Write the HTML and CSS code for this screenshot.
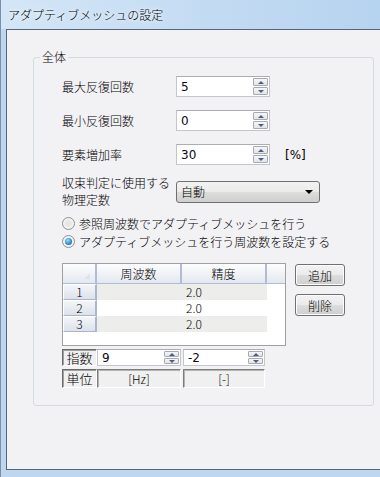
FILE: index.html
```html
<!DOCTYPE html>
<html lang="ja">
<head>
<meta charset="utf-8">
<title>アダプティブメッシュの設定</title>
<link rel="stylesheet" href="styles.css">
</head>
<body>
<div class="window">
  <div class="titlebar"><span class="title">アダプティブメッシュの設定</span></div>
  <div class="client">
    <fieldset class="group">
      <legend>全体</legend>
      <div class="inner">
        <div class="frow">
          <span class="lbl">最大反復回数</span>
          <div class="spin w94"><span class="val">5</span><span class="btns"><span class="sbtn up"></span><span class="sbtn dn"></span></span></div>
        </div>
        <div class="frow">
          <span class="lbl">最小反復回数</span>
          <div class="spin w94"><span class="val">0</span><span class="btns"><span class="sbtn up"></span><span class="sbtn dn"></span></span></div>
        </div>
        <div class="frow">
          <span class="lbl">要素増加率</span>
          <div class="spin w94"><span class="val">30</span><span class="btns"><span class="sbtn up"></span><span class="sbtn dn"></span></span></div>
          <span class="unit">[%]</span>
        </div>
        <div class="frow combo-row">
          <span class="lbl two"><span class="ln">収束判定に使用する</span><span class="ln">物理定数</span></span>
          <div class="combo"><span>自動</span><span class="carrow"></span></div>
        </div>
        <div class="radios">
          <label class="radio"><span class="rc"></span>参照周波数でアダプティブメッシュを行う</label>
          <label class="radio"><span class="rc on"></span>アダプティブメッシュを行う周波数を設定する</label>
        </div>
        <div class="tablerow">
          <div class="grid">
            <div class="hd corner"><span class="tri"></span></div>
            <div class="hd">周波数</div>
            <div class="hd">精度</div>
            <div class="hd last"></div>
            <div class="rh">1</div><div class="cell alt"></div><div class="cell alt">2.0</div><div class="cell blank"></div>
            <div class="rh">2</div><div class="cell"></div><div class="cell">2.0</div><div class="cell blank"></div>
            <div class="rh">3</div><div class="cell alt"></div><div class="cell alt">2.0</div><div class="cell blank"></div>
          </div>
          <div class="btncol">
            <button class="btn">追加</button>
            <button class="btn">削除</button>
          </div>
        </div>
        <div class="exprow">
          <span class="box">指数</span>
          <div class="spin w84 small"><span class="val">9</span><span class="btns"><span class="sbtn up"></span><span class="sbtn dn"></span></span></div>
          <div class="spin w82 small"><span class="val">-2</span><span class="btns"><span class="sbtn up"></span><span class="sbtn dn"></span></span></div>
        </div>
        <div class="unitrow">
          <span class="box">単位</span>
          <span class="ucell w84">[Hz]</span>
          <span class="ucell w82">[-]</span>
        </div>
      </div>
    </fieldset>
  </div>
</div>
</body>
</html>
```

FILE: styles.css
```css
* { box-sizing: border-box; }
html, body { margin: 0; padding: 0; }
body {
  width: 380px;
  height: 477px;
  overflow: hidden;
  font-family: "Noto Sans CJK JP", "Noto Sans", sans-serif;
  font-size: 12px;
  font-weight: 300;
  color: #000;
}
.window {
  width: 380px;
  height: 477px;
  display: flex;
  flex-direction: column;
  background: #bfd6ef;
  border-left: 1px solid #7a90a8;
  overflow: hidden;
}
.titlebar {
  height: 29px;
  flex: none;
  display: flex;
  align-items: center;
  padding-left: 7px;
  background: linear-gradient(90deg, #d4e6f7 0%, #c6ddf3 45%, #b6d3ef 100%);
}
.title {
  line-height: 14px;
  text-shadow: 0 0 6px #f2f8ff, 0 0 3px #f2f8ff;
}
.client {
  flex: 1;
  margin-left: 5px;
  margin-bottom: 7px;
  border: 1px solid #56667a;
  border-right: none;
  background: #f2f1f4;
}
.group {
  margin: 20px 0 0 26px;
  width: 341px;
  border: 1px solid #d3dbe2;
  border-radius: 3px;
  padding: 0 0 17px 6px;
}
.group legend {
  line-height: 14px;
  padding: 0 2px;
}
.inner {
  padding: 12px 0 0 22px;
}
.frow {
  display: flex;
  align-items: center;
  height: 21px;
  margin-bottom: 13px;
}
.lbl {
  width: 114px;
  flex: none;
  line-height: 14px;
}
.lbl.two {
  display: flex;
  flex-direction: column;
}
.lbl.two .ln {
  display: block;
  height: 14px;
  line-height: 14px;
  overflow: visible;
}
.lbl.two .ln + .ln { margin-top: 3px; }
.spin {
  position: relative;
  height: 21px;
  display: flex;
  align-items: center;
  background: #fff;
  border: 1px solid #c3c6cc;
  border-top-color: #abadb3;
  padding-left: 4px;
}
.w94 { width: 94px; }
.w84 { width: 84px; }
.w82 { width: 82px; }
.val {
  flex: 1;
  font-family: "DejaVu Sans", sans-serif;
  font-size: 12px;
  font-weight: 400;
  color: #0a0a14;
}
.btns {
  display: flex;
  flex-direction: column;
  justify-content: center;
  gap: 1px;
  width: 16px;
  height: 100%;
  padding: 1px 1px 1px 0;
}
.sbtn {
  flex: 1;
  display: flex;
  align-items: center;
  justify-content: center;
  border: 1px solid #a7abb0;
  border-radius: 1px;
  background: linear-gradient(#f5f6f7, #e2e4e8);
}
.sbtn::after {
  content: "";
  width: 0;
  height: 0;
  border-left: 3px solid transparent;
  border-right: 3px solid transparent;
}
.up::after { border-bottom: 3px solid #4a5e82; }
.dn::after { border-top: 3px solid #4a5e82; }
.unit {
  margin-left: 15px;
  font-family: "DejaVu Sans", sans-serif;
  font-weight: 400;
}
.combo-row {
  height: 31px;
  margin-bottom: 8px;
  margin-top: -2px;
}
.combo {
  width: 144px;
  height: 22px;
  border: 1px solid #707070;
  border-radius: 3px;
  display: flex;
  align-items: center;
  justify-content: space-between;
  padding: 0 6px 0 4px;
  background: linear-gradient(#f2f2f2 0%, #ebebeb 50%, #dddddd 50%, #cfcfcf 100%);
}
.carrow {
  width: 0;
  height: 0;
  border-left: 4px solid transparent;
  border-right: 4px solid transparent;
  border-top: 4px solid #000;
}
.radios {
  display: flex;
  flex-direction: column;
  gap: 1px;
}
.radio {
  display: flex;
  align-items: center;
  height: 17px;
  gap: 4px;
}
.rc {
  width: 13px;
  height: 13px;
  border-radius: 50%;
  border: 1px solid #8e8f8f;
  background: radial-gradient(circle, #e6e6e6 30%, #f6f6f6 70%);
  display: flex;
  align-items: center;
  justify-content: center;
}
.rc.on::after {
  content: "";
  width: 7px;
  height: 7px;
  border-radius: 50%;
  background: radial-gradient(circle at 40% 35%, #9be0ff 0%, #2f8fd6 55%, #12508f 100%);
}
.tablerow {
  display: flex;
  gap: 9px;
  margin-top: 13px;
}
.grid {
  width: 224px;
  height: 83px;
  border: 1px solid #a0a0a0;
  background: #fff;
  display: grid;
  grid-template-columns: 34px 85px 85px 18px;
  grid-template-rows: 20px 16px 16px 16px;
  align-content: start;
}
.hd {
  background: linear-gradient(#fdfdfe, #e4e8ef);
  border-right: 2px solid #afbcd3;
  border-bottom: 1px solid #afbcd3;
  display: flex;
  align-items: center;
  justify-content: center;
  line-height: 14px;
}
.hd.last { border-right: none; }
.hd.corner { position: relative; }
.tri {
  position: absolute;
  right: 5px;
  bottom: 4px;
  width: 0;
  height: 0;
  border-left: 6px solid transparent;
  border-bottom: 6px solid #dfe3ea;
}
.rh {
  background: linear-gradient(#f3f5f8, #dde2ea);
  border: 1px solid #a9b6cc;
  border-top-color: #fff;
  border-left-color: #fff;
  border-right: 2px solid #a9b6cc;
  display: flex;
  align-items: center;
  justify-content: center;
  line-height: 14px;
}
.cell {
  background: #fff;
  padding-left: 4px;
  display: flex;
  align-items: center;
  line-height: 14px;
}
.cell.alt { background: #edeeec; }
.cell.blank { background: #fff; }
.btncol {
  display: flex;
  flex-direction: column;
  gap: 8px;
  padding-top: 1px;
}
.btn {
  width: 50px;
  height: 22px;
  font: inherit;
  color: #000;
  padding: 0;
  border: 1px solid #707070;
  border-radius: 3px;
  background: linear-gradient(#f2f2f2 0%, #ebebeb 50%, #dddddd 50%, #cfcfcf 100%);
  box-shadow: inset 0 0 0 1px #fcfcfc;
}
.exprow, .unitrow {
  display: flex;
  gap: 2px;
}
.exprow { margin-top: 3px; height: 17px; }
.unitrow { margin-top: 3px; height: 19px; }
.exprow .spin { height: 17px; }
.box {
  width: 35px;
  margin-right: -2px;
  display: flex;
  align-items: center;
  justify-content: center;
  border: 1px solid;
  border-color: #6a6a6a #ffffff #ffffff #6a6a6a;
  box-shadow: inset 1px 1px 0 #a0a0a0;
  background: #f0f0f0;
  font-size: 13px;
  line-height: 14px;
}
.ucell {
  display: flex;
  align-items: center;
  justify-content: center;
  border: 1px solid;
  border-color: #7d7d7d #ffffff #ffffff #7d7d7d;
  box-shadow: inset 1px 1px 0 #b4b4b4;
  background: #f0f0f0;
  font-size: 12px;
}
```
